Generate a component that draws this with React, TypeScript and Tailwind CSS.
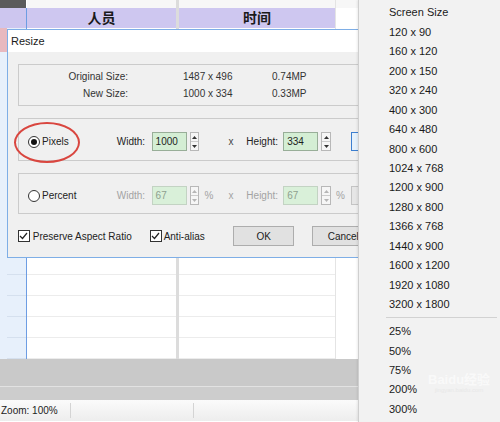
import React from "react";

const menuItems = [
  "Screen Size",
  "120 x 90",
  "160 x 120",
  "200 x 150",
  "320 x 240",
  "400 x 300",
  "640 x 480",
  "800 x 600",
  "1024 x 768",
  "1200 x 900",
  "1280 x 800",
  "1366 x 768",
  "1440 x 900",
  "1600 x 1200",
  "1920 x 1080",
  "3200 x 1800",
];
const zoomItems = ["25%", "50%", "75%", "200%", "300%"];

// heights of the sheet rows below the header (28px .. 360px)
const rowHeights = [24, 20, 20, 20, 20, 20, 20, 20, 20, 20, 22, 21, 21, 21, 21, 21];

function SheetRow({ h, pink }: { h: number; pink?: boolean }) {
  return (
    <div className="flex" style={{ height: h }}>
      <div className="flex w-[27px] border-r border-[#6d9de3] bg-[#e7f0fb]">
        <div className={pink ? "w-[7px] bg-[#e8b9bf]" : "w-[7px]"} />
        <div className="flex-1 border-b border-[#d5e0ee]" />
      </div>
      <div className="w-[149px] border-b border-[#ececec] bg-white" />
      <div className="w-[3px] bg-[#dcdcdc]" />
      <div className="w-[156px] border-b border-[#ececec] bg-white" />
      <div className="flex-1 border-l border-[#e4e4e4] bg-white" />
    </div>
  );
}

function Spin({ disabled }: { disabled?: boolean }) {
  const c = disabled ? "#b5b5b5" : "#333333";
  return (
    <div className="ml-[3px] flex h-[19px] w-[10px] flex-col border border-[#b8b8b8] bg-[#f6f6f6]">
      <div className="flex flex-1 items-center justify-center border-b border-[#cccccc]">
        <svg width="5" height="3" viewBox="0 0 5 3">
          <path d="M0 3h5L2.5 0z" fill={c} />
        </svg>
      </div>
      <div className="flex flex-1 items-center justify-center">
        <svg width="5" height="3" viewBox="0 0 5 3">
          <path d="M0 0h5L2.5 3z" fill={c} />
        </svg>
      </div>
    </div>
  );
}

function NumInput({ value, disabled }: { value: string; disabled?: boolean }) {
  return (
    <div
      className={
        disabled
          ? "flex h-[19px] w-[35px] items-center border border-[#c3d3c3] bg-[#d9f0d9] pl-[3px] text-[#8f9f8f]"
          : "flex h-[19px] w-[35px] items-center border border-[#98ae98] bg-[#d4eed4] pl-[3px] text-[#1e1e1e]"
      }
    >
      {value}
    </div>
  );
}

function Radio({ checked }: { checked?: boolean }) {
  return (
    <div className="flex h-[12px] w-[12px] items-center justify-center rounded-full border border-[#333] bg-white">
      {checked && <div className="h-[6px] w-[6px] rounded-full bg-[#111]" />}
    </div>
  );
}

function Check() {
  return (
    <div className="flex h-[12px] w-[12px] items-center justify-center border border-[#333] bg-white">
      <svg width="9" height="8" viewBox="0 0 9 8">
        <path d="M1 4l2.5 2.5L8 1" fill="none" stroke="#222" strokeWidth="1.2" />
      </svg>
    </div>
  );
}

function SizeRow({ percent }: { percent?: boolean }) {
  const label = percent ? "text-[#a3a3a3]" : "text-[#222]";
  return (
    <div className="flex items-center">
      <div className="ml-[9px] flex w-[89px] items-center">
        <Radio checked={!percent} />
        <span className="ml-[2px] text-[#222]">{percent ? "Percent" : "Pixels"}</span>
      </div>
      <span className={`w-[35px] ${label}`}>Width:</span>
      <NumInput value={percent ? "67" : "1000"} disabled={percent} />
      <Spin disabled={percent} />
      <span className="w-[29px] pl-[5px] text-[#a3a3a3]">{percent ? "%" : ""}</span>
      <span className={`w-[18px] ${percent ? "text-[#a3a3a3]" : "text-[#444]"}`}>x</span>
      <span className={`w-[37px] ${label}`}>Height:</span>
      <NumInput value={percent ? "67" : "334"} disabled={percent} />
      <Spin disabled={percent} />
      <span className="w-[20px] pl-[5px] text-[#a3a3a3]">{percent ? "%" : ""}</span>
      <div
        className={
          percent
            ? "flex h-[19px] w-[22px] items-center justify-center border border-[#c4c4c4] bg-[#e6e6e6] text-[#999]"
            : "flex h-[19px] w-[22px] items-center justify-center border border-[#3c7fd0] bg-[#e5f1fb] text-[#222]"
        }
      >
        ...
      </div>
    </div>
  );
}

export default function App() {
  return (
    <div className="relative h-[422px] w-[500px] overflow-hidden bg-white font-['Liberation_Sans','Noto_Sans_CJK_SC',sans-serif]">
      {/* sheet */}
      <div className="flex h-[8px]">
        <div className="w-[26px] bg-[#5b5b5b]" />
        <div className="w-[150px] border-l border-white bg-[#f7f7f7]" />
        <div className="w-[3px] bg-[#dcdcdc]" />
        <div className="w-[156px] bg-[#f7f7f7]" />
        <div className="flex-1 border-l border-[#e4e4e4] bg-[#f7f7f7]" />
      </div>
      <div className="flex h-[20px]">
        <div className="w-[27px] border-r border-[#6d9de3] bg-[#cdc6ef]" />
        <div className="flex w-[149px] items-center justify-center bg-[#cec7f0] text-[14px] font-bold text-[#1a1a1a]">
          人员
        </div>
        <div className="w-[3px] bg-[#dcdcdc]" />
        <div className="flex w-[156px] items-center justify-center bg-[#cec7f0] text-[14px] font-bold text-[#1a1a1a]">
          时间
        </div>
        <div className="flex-1 border-l border-[#e4e4e4] bg-white" />
      </div>
      {rowHeights.map((h, i) => (
        <SheetRow key={i} h={h} pink={i === 0} />
      ))}
      <div className="h-[27px] bg-[#c9c9c9]" />
      <div className="h-[1px] bg-[#e2e2e2]" />
      <div className="h-[13px] bg-[#cdcdcd]" />
      <div className="flex h-[21px] items-center bg-gradient-to-b from-[#fbfbfb] to-[#ededed] text-[10px] text-[#222]">
        <span className="w-[70px] pl-[1px]">Zoom: 100%</span>
        <div className="h-[15px] w-px bg-[#d4d4d4]" />
        <div className="w-[122px]" />
        <div className="h-[15px] w-px bg-[#d4d4d4]" />
      </div>

      {/* Resize dialog */}
      <div className="absolute left-[7px] top-[29px] flex h-[229px] w-[368px] flex-col border border-[#7eaee6] bg-[#f0f0f0] text-[10px]">
        <div className="flex h-[22px] items-center bg-white pl-[3px] text-[11px] text-[#1a1a1a]">Resize</div>
        <div className="flex flex-col pl-[10px] pt-[12px]">
          <div className="h-[42px] border border-[#cbcbcb] pt-[3px] text-[#333]">
            <div className="flex leading-[17px]">
              <span className="w-[109px] text-right">Original Size:</span>
              <span className="ml-[55px] w-[89px]">1487 x 496</span>
              <span>0.74MP</span>
            </div>
            <div className="flex leading-[17px]">
              <span className="w-[109px] text-right">New Size:</span>
              <span className="ml-[55px] w-[89px]">1000 x 334</span>
              <span>0.33MP</span>
            </div>
          </div>
          <div className="mt-[12px] h-[43px] border border-[#cbcbcb] pt-[13px]">
            <SizeRow />
          </div>
          <div className="mt-[12px] h-[41px] border border-[#cbcbcb] pt-[12px]">
            <SizeRow percent />
          </div>
          <div className="mt-[12px] flex h-[20px] items-center text-[#222]">
            <Check />
            <span className="ml-[3px] w-[120px]">Preserve Aspect Ratio</span>
            <Check />
            <span className="ml-[2px] w-[71px]">Anti-alias</span>
            <div className="flex h-[20px] w-[63px] items-center justify-center border border-[#adadad] bg-[#e1e1e1]">
              OK
            </div>
            <div className="ml-[18px] flex h-[20px] w-[63px] items-center justify-center border border-[#adadad] bg-[#e1e1e1]">
              Cancel
            </div>
          </div>
        </div>
      </div>

      {/* red annotation ring */}
      <div className="absolute left-[14px] top-[122px] h-[41px] w-[66px] rounded-[50%] border-2 border-[#d9463f]" />

      {/* dropdown menu */}
      <div className="absolute right-0 top-0 flex h-[422px] w-[142px] flex-col border-l border-[#cfcfcf] bg-[#f2f2f2] pt-[3px] text-[11px] text-[#1a1a1a] shadow-[-1px_0_2px_rgba(0,0,0,0.08)]">
        {menuItems.map((t) => (
          <div key={t} className="flex h-[19.45px] items-center pl-[30px]">
            {t}
          </div>
        ))}
        <div className="ml-[27px] mr-[3px] mt-[3px] mb-[4px] h-px bg-[#d2d2d2]" />
        {zoomItems.map((t) => (
          <div key={t} className="flex h-[19.3px] items-center pl-[30px]">
            {t}
          </div>
        ))}
      </div>

      {/* watermark */}
      <div className="pointer-events-none absolute left-[428px] top-[372px] flex flex-col items-center text-white opacity-60">
        <span className="text-[13px] font-bold leading-[15px]">Baidu经验</span>
        <span className="text-[6px] leading-[7px] text-[#e2e2e2]">jingyan.baidu.com</span>
      </div>
    </div>
  );
}
